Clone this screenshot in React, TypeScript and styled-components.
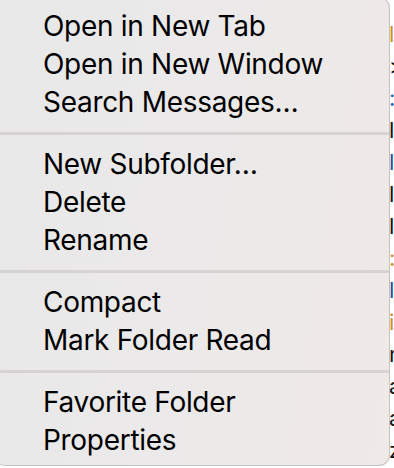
import React from "react";
import styled, { createGlobalStyle } from "styled-components";

const Global = createGlobalStyle`
  html, body { margin: 0; padding: 0; background: #ffffff; }
  body { width: 394px; height: 468px; overflow: hidden; }
`;

const Page = styled.div`
  position: relative;
  width: 394px;
  height: 468px;
  overflow: hidden;
  background: #ffffff;
  font-family: Inter, "Noto Sans", sans-serif;
`;

const Behind = styled.div`
  display: flex;
  flex-direction: column;
  padding: 18px 0 0 389px;
`;

const BehindRow = styled.div<{ $color: string }>`
  height: 32px;
  font-size: 22px;
  line-height: 32px;
  color: ${(p) => p.$color};
  white-space: nowrap;
`;

const Menu = styled.div`
  position: absolute;
  left: -6px;
  top: -3px;
  width: 396px;
  height: 469px;
  box-sizing: border-box;
  padding: 9px 0 0 0;
  border-radius: 11px;
  border: 1px solid rgba(0, 0, 0, 0.16);
  background: linear-gradient(100deg, #e9e8e8 0%, #ebe9e9 50%, #efe9e7 100%);
  display: flex;
  flex-direction: column;
`;

const Item = styled.div`
  height: 38px;
  display: flex;
  align-items: center;
  padding-left: 48px;
  font-size: 28px;
  color: #000000;
  letter-spacing: -0.3px;
  white-space: nowrap;
`;

const Separator = styled.div`
  height: 24px;
  display: flex;
  align-items: center;
  &::after {
    content: "";
    display: block;
    width: 100%;
    height: 3px;
    background: #d6d3d2;
  }
`;

const groups = [
  ["Open in New Tab", "Open in New Window", "Search Messages…"],
  ["New Subfolder…", "Delete", "Rename"],
  ["Compact", "Mark Folder Read"],
  ["Favorite Folder", "Properties"],
];

const behind: [string, string][] = [
  ["l", "#c8902a"],
  [">", "#111"],
  [":", "#2a5fb0"],
  ["l", "#111"],
  ["l", "#1d4fa0"],
  ["l", "#111"],
  ["l", "#111"],
  [":", "#c8902a"],
  ["l", "#1d4fa0"],
  ["i", "#c8902a"],
  ["n", "#111"],
  ["a", "#111"],
  ["a", "#111"],
  ["z", "#111"],
];

export default function App() {
  return (
    <Page>
      <Global />
      <Behind>
        {behind.map(([t, c], i) => (
          <BehindRow key={i} $color={c}>
            {t}
          </BehindRow>
        ))}
      </Behind>
      <Menu>
        {groups.map((g, gi) => (
          <React.Fragment key={gi}>
            {gi > 0 && <Separator />}
            {g.map((label) => (
              <Item key={label}>{label}</Item>
            ))}
          </React.Fragment>
        ))}
      </Menu>
    </Page>
  );
}
